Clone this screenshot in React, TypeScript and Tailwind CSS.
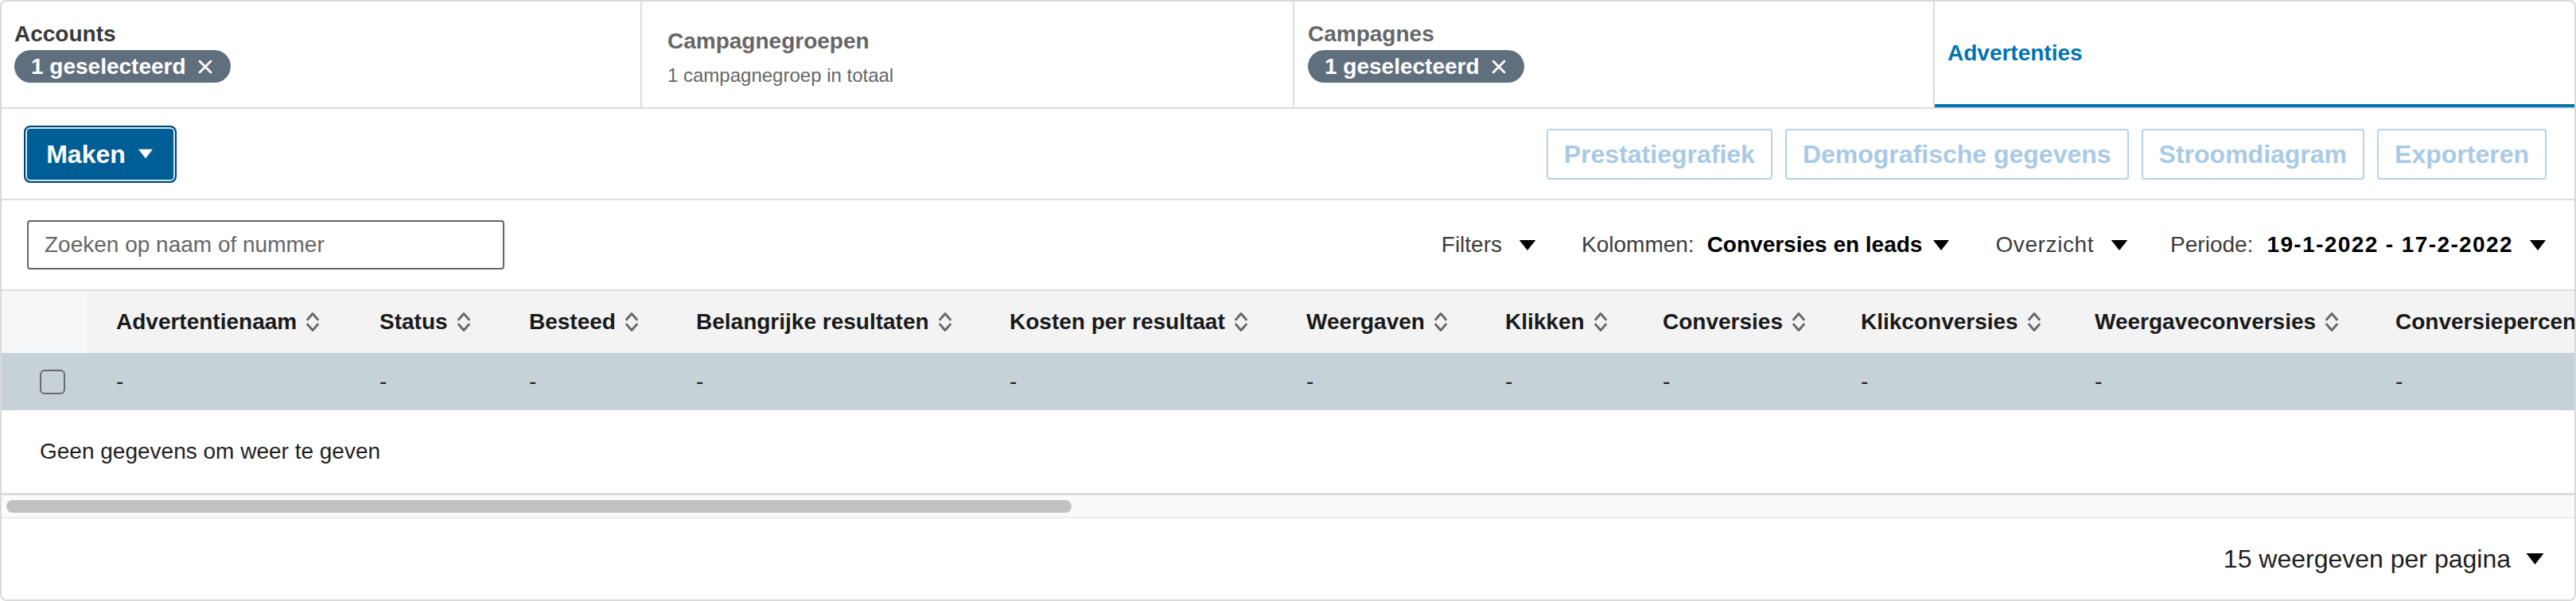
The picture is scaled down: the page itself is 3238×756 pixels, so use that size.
import React from "react";

const Caret = ({ className = "" }: { className?: string }) => (
  <svg viewBox="0 0 24 16" className={className} aria-hidden="true">
    <path d="M1 1 L23 1 L12 15 Z" fill="currentColor" />
  </svg>
);

const SortIcon = () => (
  <svg viewBox="0 0 20 26" className="w-[20px] h-[26px] shrink-0" aria-hidden="true">
    <path d="M3.5 10 L10 2.5 L16.5 10" fill="none" stroke="#666666" strokeWidth="2.8" strokeLinecap="round" strokeLinejoin="round" />
    <path d="M3.5 16 L10 23.5 L16.5 16" fill="none" stroke="#666666" strokeWidth="2.8" strokeLinecap="round" strokeLinejoin="round" />
  </svg>
);

const XIcon = () => (
  <svg viewBox="0 0 20 20" className="w-[20px] h-[20px]" aria-hidden="true">
    <path d="M3 3 L17 17 M17 3 L3 17" stroke="#ffffff" strokeWidth="2.8" strokeLinecap="round" />
  </svg>
);

const Pill = () => (
  <div className="inline-flex items-center h-[41px] rounded-full bg-[#5f6f7e] text-white font-bold text-[28px] leading-none pl-[21px] pr-[22px] gap-[14px] self-start">
    <span>1 geselecteerd</span>
    <XIcon />
  </div>
);

const columns: { label: string; w: string }[] = [
  { label: "Advertentienaam", w: "w-[331px]" },
  { label: "Status", w: "w-[188px]" },
  { label: "Besteed", w: "w-[210px]" },
  { label: "Belangrijke resultaten", w: "w-[394px]" },
  { label: "Kosten per resultaat", w: "w-[373px]" },
  { label: "Weergaven", w: "w-[250px]" },
  { label: "Klikken", w: "w-[198px]" },
  { label: "Conversies", w: "w-[249px]" },
  { label: "Klikconversies", w: "w-[294px]" },
  { label: "Weergaveconversies", w: "w-[378px]" },
  { label: "Conversiepercentage", w: "w-[420px]" },
];

export default function App() {
  return (
    <div className="w-[3238px] h-[756px] bg-white border-2 border-[#d9d9d9] rounded-[8px] overflow-hidden flex flex-col font-['Liberation_Sans',Arial,sans-serif] text-[#222]">
      {/* Tabs */}
      <div className="grid grid-cols-[805px_820px_805px_1fr] h-[135px] border-b-2 border-[#dcdcdc] shrink-0">
        <div className="border-r-2 border-[#dcdcdc] pl-[16px] pt-[25px] flex flex-col">
          <div className="text-[28px] leading-[32px] font-bold text-[#383838]">Accounts</div>
          <div className="mt-[4px] flex">
            <Pill />
          </div>
        </div>
        <div className="border-r-2 border-[#dcdcdc] pl-[32px] pt-[34px] flex flex-col">
          <div className="text-[28px] leading-[32px] font-bold text-[#666]">Campagnegroepen</div>
          <div className="mt-[12px] text-[24px] leading-[30px] text-[#666]">1 campagnegroep in totaal</div>
        </div>
        <div className="border-r-2 border-[#dcdcdc] pl-[17px] pt-[25px] flex flex-col">
          <div className="text-[28px] leading-[32px] font-bold text-[#666]">Campagnes</div>
          <div className="mt-[4px] flex">
            <Pill />
          </div>
        </div>
        <div className="border-b-4 border-[#0073b1] pl-[16px] flex items-center">
          <div className="text-[28px] leading-[32px] font-bold text-[#0073b1]">Advertenties</div>
        </div>
      </div>

      {/* Toolbar */}
      <div className="h-[115px] border-b-2 border-[#dcdcdc] shrink-0 flex items-center justify-between pl-[28px] pr-[35px]">
        <button className="w-[192px] h-[72px] rounded-[8px] bg-[#005e96] border-2 border-[#004470] shadow-[inset_0_0_0_2px_#cfe7f8] flex items-center justify-center gap-[14px] text-white font-bold text-[32px]">
          <span>Maken</span>
          <Caret className="w-[22px] h-[13px] text-white" />
        </button>
        <div className="flex items-center gap-[16px]">
          {["Prestatiegrafiek", "Demografische gegevens", "Stroomdiagram", "Exporteren"].map((t) => (
            <div
              key={t}
              className="h-[64px] px-[20px] rounded-[4px] border-2 border-[#b4d3eb] text-[#a8cae5] font-bold text-[32px] flex items-center"
            >
              {t}
            </div>
          ))}
        </div>
      </div>

      {/* Filter bar */}
      <div className="h-[114px] border-b-2 border-[#dcdcdc] shrink-0 flex items-center justify-between pl-[32px] pr-[35px]">
        <div className="w-[600px] h-[62px] border-2 border-[#666] rounded-[4px] flex items-center pl-[20px] text-[28px] text-[#666]">
          Zoeken op naam of nummer
        </div>
        <div className="flex items-center text-[28px] text-[#3c3c3c]">
          <span>Filters</span>
          <Caret className="w-[24px] h-[15px] ml-[20px] text-black" />
          <span className="ml-[56px]">Kolommen:</span>
          <span className="ml-[16px] font-bold text-black">Conversies en leads</span>
          <Caret className="w-[22px] h-[15px] ml-[13px] text-black" />
          <span className="ml-[57px] tracking-[0.6px]">Overzicht</span>
          <Caret className="w-[24px] h-[15px] ml-[20px] text-black" />
          <span className="ml-[52px]">Periode:</span>
          <span className="ml-[17px] font-bold text-black tracking-[1.4px]">19-1-2022 - 17-2-2022</span>
          <Caret className="w-[22px] h-[15px] ml-[20px] text-black" />
        </div>
      </div>

      {/* Table */}
      <div className="overflow-hidden shrink-0">
        <div className="flex h-[78px] bg-[#f3f3f4] w-max">
          <div className="w-[108px] shrink-0 bg-[#f6f7f8]" />
          {columns.map((c) => (
            <div key={c.label} className={`${c.w} shrink-0 pl-[36px] flex items-center gap-[10px] text-[28px] font-bold text-[#1a1a1a] whitespace-nowrap`}>
              <span>{c.label}</span>
              <SortIcon />
            </div>
          ))}
        </div>
        <div className="flex h-[72px] bg-[#c7d1d8] w-max">
          <div className="w-[108px] shrink-0 flex items-center pl-[48px]">
            <div className="w-[32px] h-[31px] rounded-[6px] border-2 border-[#6b6b6b]" />
          </div>
          {columns.map((c) => (
            <div key={c.label} className={`${c.w} shrink-0 pl-[36px] flex items-center text-[28px] text-[#1f1f1f]`}>
              -
            </div>
          ))}
        </div>
      </div>
      <div className="h-[104px] shrink-0 flex items-center pl-[48px] text-[28px] text-[#1f1f1f]">
        Geen gegevens om weer te geven
      </div>

      {/* Scrollbar */}
      <div className="h-[32px] shrink-0 border-t-[3px] border-b-2 border-t-[#dcdcdc] border-b-[#ececec] bg-[#fafafa] flex items-center pl-[6px]">
        <div className="w-[1339px] h-[16px] rounded-full bg-[#c1c1c1]" />
      </div>

      {/* Footer */}
      <div className="flex-1 flex items-center justify-end pr-[37px] text-[32px] text-[#1f1f1f]">
        <span>15 weergeven per pagina</span>
        <Caret className="w-[25px] h-[16px] ml-[18px] text-black" />
      </div>
    </div>
  );
}
